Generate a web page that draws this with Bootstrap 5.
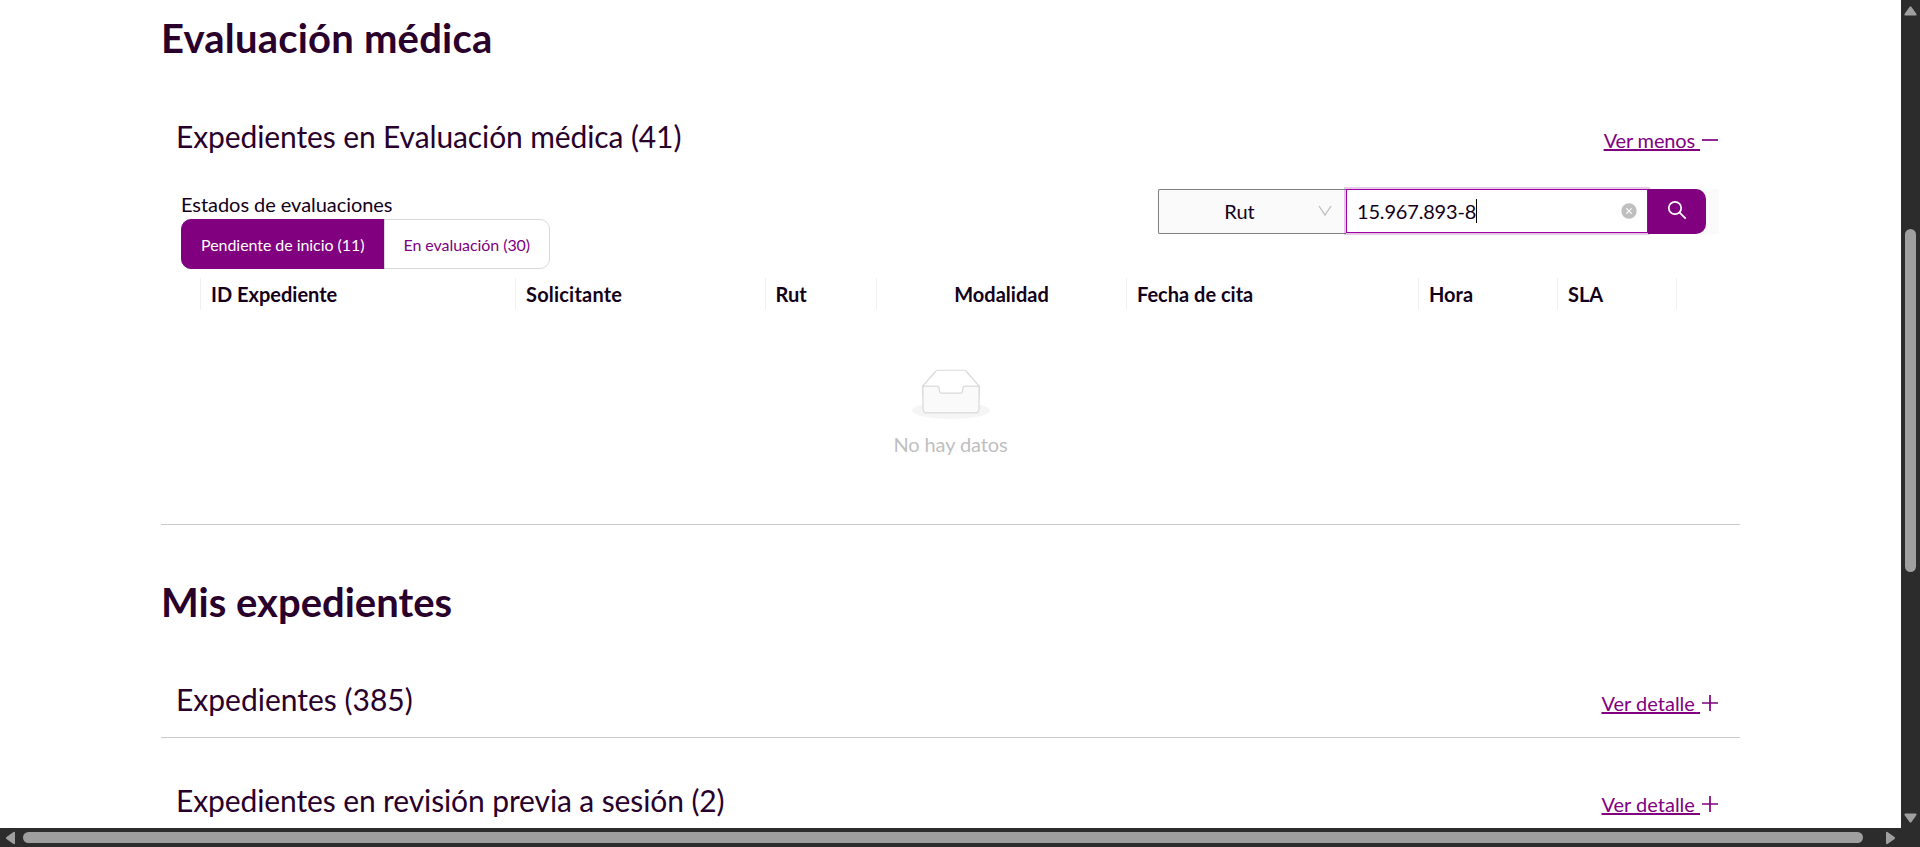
<!DOCTYPE html>
<html lang="es">
<head>
<meta charset="utf-8">
<meta name="viewport" content="width=device-width, initial-scale=1">
<title>Evaluación médica</title>
<link href="https://cdn.jsdelivr.net/npm/bootstrap@5.3.0/dist/css/bootstrap.min.css" rel="stylesheet">
<style>
:root { --brand: #800080; --ink: #29002b; }
body { font-family: Lato, sans-serif; font-size: 20px; line-height: 24px; color: #14001a; background: #2c2c2c; }
svg { display: block; flex: none; }
.shell { display: grid; grid-template: 828px 19px / 1901px 19px; height: 847px; overflow: hidden; }
.viewport { padding: 14px 161px 0; overflow: hidden; background: #fff; }
h1 { font-size: 40px; line-height: 48px; font-weight: 700; color: var(--ink); margin: 0; }
h1.wide { letter-spacing: .2px; }
h1.second { margin-top: 53px; }
h2 { font-size: 30px; line-height: 36px; font-weight: 400; color: var(--ink); margin: 0; }
h2.tight { letter-spacing: -.11px; }
.section-row { padding: 0 22px 0 15px; height: 36px; }
.section-first { margin-top: 56px; }
.second + .section-first { margin-top: 55px; }
.third { margin-top: 44px; }
.toggle-link { color: var(--brand); text-decoration: none; }
.toggle-link span { text-decoration: underline; text-decoration-thickness: 2px; white-space: pre; }
.toggle-link .less { letter-spacing: -.15px; }
.toggle-link svg { display: inline-block; vertical-align: -1px; margin-left: 2px; }
.filters { padding: 0 21px 0 20px; margin-top: 35px; height: 80px; }
.states { padding-top: 3px; }
.states-label { height: 27px; letter-spacing: -.05px; }
.btn-state { --bs-btn-font-size: 16px; --bs-btn-line-height: 24px; --bs-btn-border-radius: 10px; --bs-btn-border-color: #d9d9d9; --bs-btn-color: var(--brand); height: 50px; padding-top: 8px; white-space: nowrap; letter-spacing: -.06px; }
.btn-state.on { background: var(--brand); border-color: var(--brand); color: #fff; width: 203.500px; }
.btn-state.off { width: 166.500px; }
.search { height: 45px; width: 561px; background: #fafafa; border-radius: 2px; }
.kind { width: 188px; border: 1px solid #808080; border-right: 0; border-radius: 2px 0 0 2px; padding: 0 14px 2px 2px; }
.query { width: 302px; height: 44px; background: #fff; border: 1px solid #a000a5; box-shadow: 0 0 0 2px rgba(128,0,128,.2); padding: 0 10px 0 10px; z-index: 1; letter-spacing: -.18px; }
.caret { width: 1px; height: 24px; background: #000; }
.btn-search { width: 58px; z-index: 2; background: var(--brand); border-radius: 0 10px 10px 0; padding: 0 0 4px; border: 0; }
.heads { display: grid; grid-template-columns: 315px 249.5px 111.5px 250px 292px 139px 119px; margin: 9px 0 0 39px; height: 32px; width: 1477px; border-right: 1px solid #f0f0f0; font-weight: 700; color: #14001a; }
.heads > div { border-left: 1px solid #f0f0f0; padding: 4px 10px; }
.heads .applicant { letter-spacing: .2px; }
.nodata { height: 214px; padding-top: 59px; color: #bfbfbf; }
.nodata-text { padding-top: 13px; letter-spacing: -.1px; }
.line { height: 1px; background: #c9c9c9; }
.line-inner { margin-top: 20px; }
</style>
</head>
<body>
<div class="shell">
  <main class="viewport">
    <h1 class="wide">Evaluación médica</h1>
    <div class="section-row section-first d-flex justify-content-between align-items-baseline">
      <h2 class="tight">Expedientes en Evaluación médica (41)</h2>
      <a class="toggle-link" href="#"><span class="less">Ver menos </span><svg width="16" height="18" viewBox="0 0 16 18"><path d="M0 9h16" stroke="#800080" stroke-width="1.700"/></svg></a>
    </div>
    <div class="filters d-flex justify-content-between">
      <div class="states">
        <div class="states-label">Estados de evaluaciones</div>
        <div class="btn-group">
          <button class="btn btn-state on px-0">Pendiente de inicio (11)</button>
          <button class="btn btn-state off px-0">En evaluación (30)</button>
        </div>
      </div>
      <div class="search d-flex">
        <div class="kind d-flex align-items-center">
          <div class="flex-grow-1 text-center">Rut</div>
          <svg width="14" height="14" viewBox="0 0 14 14"><path d="M1 2l6 9 6-9" fill="none" stroke="#bfbfbf" stroke-width="1.300"/></svg>
        </div>
        <div class="query d-flex align-items-center">
          <span>15.967.893-8</span><span class="caret"></span>
          <svg class="ms-auto" width="16" height="16" viewBox="0 0 16 16"><circle cx="8" cy="8" r="7.700" fill="#bfbfbf"/><path d="M5.400 5.400l5.200 5.200M10.600 5.400l-5.200 5.200" stroke="#fff" stroke-width="1.300"/></svg>
        </div>
        <button class="btn btn-search d-flex align-items-center justify-content-center" aria-label="Buscar">
          <svg width="20" height="20" viewBox="0 0 20 20" fill="none" stroke="#fff" stroke-width="1.700"><circle cx="8" cy="8" r="6.200"/><path d="M12.400 12.400l6.300 6.300"/></svg>
        </button>
      </div>
    </div>
    <div class="heads">
      <div>ID Expediente</div><div class="applicant">Solicitante</div><div>Rut</div><div class="text-center">Modalidad</div><div>Fecha de cita</div><div>Hora</div><div>SLA</div>
    </div>
    <div class="nodata d-flex flex-column align-items-center">
      <svg width="78" height="50" viewBox="0 0 64 41"><g transform="translate(0 1)" fill="none" fill-rule="evenodd"><ellipse fill="#f5f5f5" cx="32" cy="33" rx="32" ry="7"/><g stroke="#d9d9d9"><path d="M55 12.760L44.854 1.258C44.367.474 43.656 0 42.907 0H21.093c-.749 0-1.460.474-1.947 1.257L9 12.761V22h46v-9.240z"/><path d="M41.613 15.931c0-1.605.994-2.930 2.227-2.931H55v18.137C55 33.260 53.680 35 52.050 35h-40.100C10.320 35 9 33.259 9 31.137V13h11.160c1.233 0 2.227 1.323 2.227 2.928v.022c0 1.605 1.005 2.901 2.237 2.901h14.752c1.232 0 2.237-1.308 2.237-2.913v-.007z" fill="#fafafa"/></g></g></svg>
      <div class="nodata-text">No hay datos</div>
    </div>
    <div class="line"></div>
    <h1 class="second">Mis expedientes</h1>
    <div class="section-row section-first d-flex justify-content-between align-items-baseline">
      <h2>Expedientes (385)</h2>
      <a class="toggle-link" href="#"><span>Ver detalle </span><svg width="16" height="18" viewBox="0 0 16 18"><path d="M0 9h16M8 1v16" stroke="#800080" stroke-width="1.700"/></svg></a>
    </div>
    <div class="line line-inner"></div>
    <div class="section-row third d-flex justify-content-between align-items-baseline">
      <h2 class="tight">Expedientes en revisión previa a sesión (2)</h2>
      <a class="toggle-link" href="#"><span>Ver detalle </span><svg width="16" height="18" viewBox="0 0 16 18"><path d="M0 9h16M8 1v16" stroke="#800080" stroke-width="1.700"/></svg></a>
    </div>
  </main>
  <svg width="19" height="828" viewBox="0 0 19 828" fill="#9f9f9f"><path d="M8.500 7q1-1.500 2 0l5 7q.600 1.500-1 1.500h-10q-1.600 0-1-1.500z"/><rect x="4" y="229" width="11" height="343" rx="5.500"/><path d="M8.500 822q1 1.500 2 0l5-7q.600-1.500-1-1.500h-10q-1.600 0-1 1.500z"/></svg>
  <svg width="1901" height="19" viewBox="0 0 1901 19" fill="#9f9f9f"><path d="M6.500 9q-1.500 1 0 2l7 5q1.500.600 1.500-1v-10q0-1.600-1.500-1z"/><rect x="23" y="4" width="1840" height="11" rx="5.500"/><path d="M1894.500 9q1.500 1 0 2l-7 5q-1.500.600-1.500-1v-10q0-1.600 1.500-1z"/></svg>
</div>
<script src="https://cdn.jsdelivr.net/npm/bootstrap@5.3.0/dist/js/bootstrap.bundle.min.js"></script>
</body>
</html>
